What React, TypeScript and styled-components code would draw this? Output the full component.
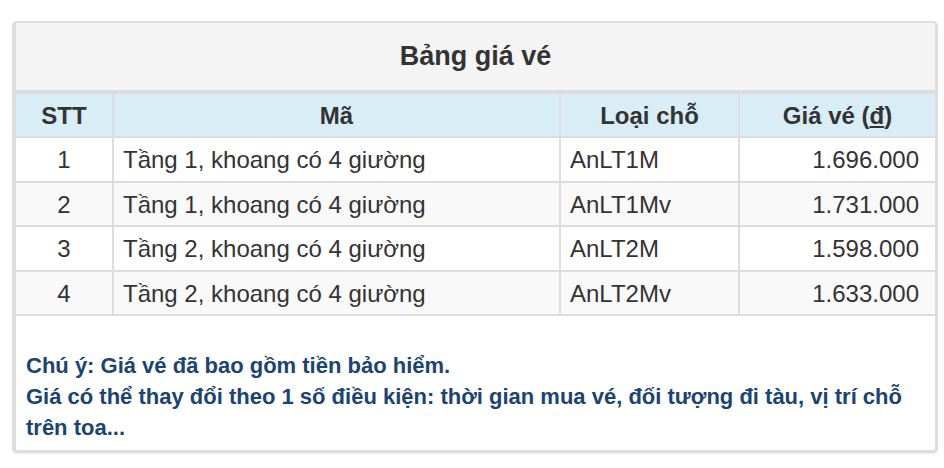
import React from "react";
import styled, { createGlobalStyle } from "styled-components";

const GlobalStyle = createGlobalStyle`
  html, body {
    margin: 0;
    padding: 0;
    background: #ffffff;
  }
  body {
    font-family: "Liberation Sans", Arial, Helvetica, sans-serif;
    color: #333333;
  }
`;

const Page = styled.div`
  padding: 21px 6px 16px 12px;
  width: 926px;
`;

const Panel = styled.section`
  background: #ffffff;
  border-style: solid;
  border-color: #dddddd;
  border-width: 2px 3px 3px 4px;
  border-radius: 5px;
  box-shadow: 0 2px 2px rgba(0, 0, 0, 0.05);
  overflow: hidden;
`;

const Heading = styled.header`
  height: 67px;
  display: flex;
  align-items: center;
  justify-content: center;
  background: #f4f4f4;
  border-bottom: 2px solid #dddddd;
`;

const Title = styled.h3`
  margin: 0;
  font-size: 27px;
  font-weight: 700;
  color: #333333;
`;

const Table = styled.table`
  width: 100%;
  border-collapse: collapse;
  font-size: 24px;
  line-height: 28.4px;
`;

const HeadCell = styled.th`
  background: #d9edf7;
  font-weight: 700;
  text-align: center;
  padding: 8px 9px 6px 9px;
  border: 2px solid #dddddd;
  &:first-child { border-left: none; }
  &:last-child { border-right: none; }
`;

const Row = styled.tr<{ $striped: boolean }>`
  background: ${(p) => (p.$striped ? "#f9f9f9" : "#ffffff")};
`;

const Cell = styled.td<{ $align: "left" | "center" | "right" }>`
  text-align: ${(p) => p.$align};
  padding: 8px ${(p) => (p.$align === "right" ? "16px" : "9px")} 6px 9px;
  border: 2px solid #dddddd;
  &:first-child { border-left: none; }
  &:last-child { border-right: none; }
`;

const Note = styled.div`
  padding: 34px 10px 7px 10px;
  font-size: 22px;
  line-height: 31px;
  font-weight: 700;
  color: #1b4472;
`;

const NoteLine = styled.p`
  margin: 0;
`;

const rows = [
  { stt: 1, ma: "Tầng 1, khoang có 4 giường", loai: "AnLT1M", gia: "1.696.000" },
  { stt: 2, ma: "Tầng 1, khoang có 4 giường", loai: "AnLT1Mv", gia: "1.731.000" },
  { stt: 3, ma: "Tầng 2, khoang có 4 giường", loai: "AnLT2M", gia: "1.598.000" },
  { stt: 4, ma: "Tầng 2, khoang có 4 giường", loai: "AnLT2Mv", gia: "1.633.000" },
];

export default function App() {
  return (
    <>
      <GlobalStyle />
      <Page>
        <Panel>
          <Heading>
            <Title>Bảng giá vé</Title>
          </Heading>
          <Table>
            <colgroup>
              <col style={{ width: 97 }} />
              <col style={{ width: 447 }} />
              <col style={{ width: 179 }} />
              <col />
            </colgroup>
            <thead>
              <tr>
                <HeadCell>STT</HeadCell>
                <HeadCell>Mã</HeadCell>
                <HeadCell>Loại chỗ</HeadCell>
                <HeadCell>Giá vé (<u>đ</u>)</HeadCell>
              </tr>
            </thead>
            <tbody>
              {rows.map((r, i) => (
                <Row key={r.stt} $striped={i % 2 === 1}>
                  <Cell $align="center">{r.stt}</Cell>
                  <Cell $align="left">{r.ma}</Cell>
                  <Cell $align="left">{r.loai}</Cell>
                  <Cell $align="right">{r.gia}</Cell>
                </Row>
              ))}
            </tbody>
          </Table>
          <Note>
            <NoteLine>Chú ý: Giá vé đã bao gồm tiền bảo hiểm.</NoteLine>
            <NoteLine>
              Giá có thể thay đổi theo 1 số điều kiện: thời gian mua vé, đối tượng đi tàu, vị trí chỗ trên toa...
            </NoteLine>
          </Note>
        </Panel>
      </Page>
    </>
  );
}
